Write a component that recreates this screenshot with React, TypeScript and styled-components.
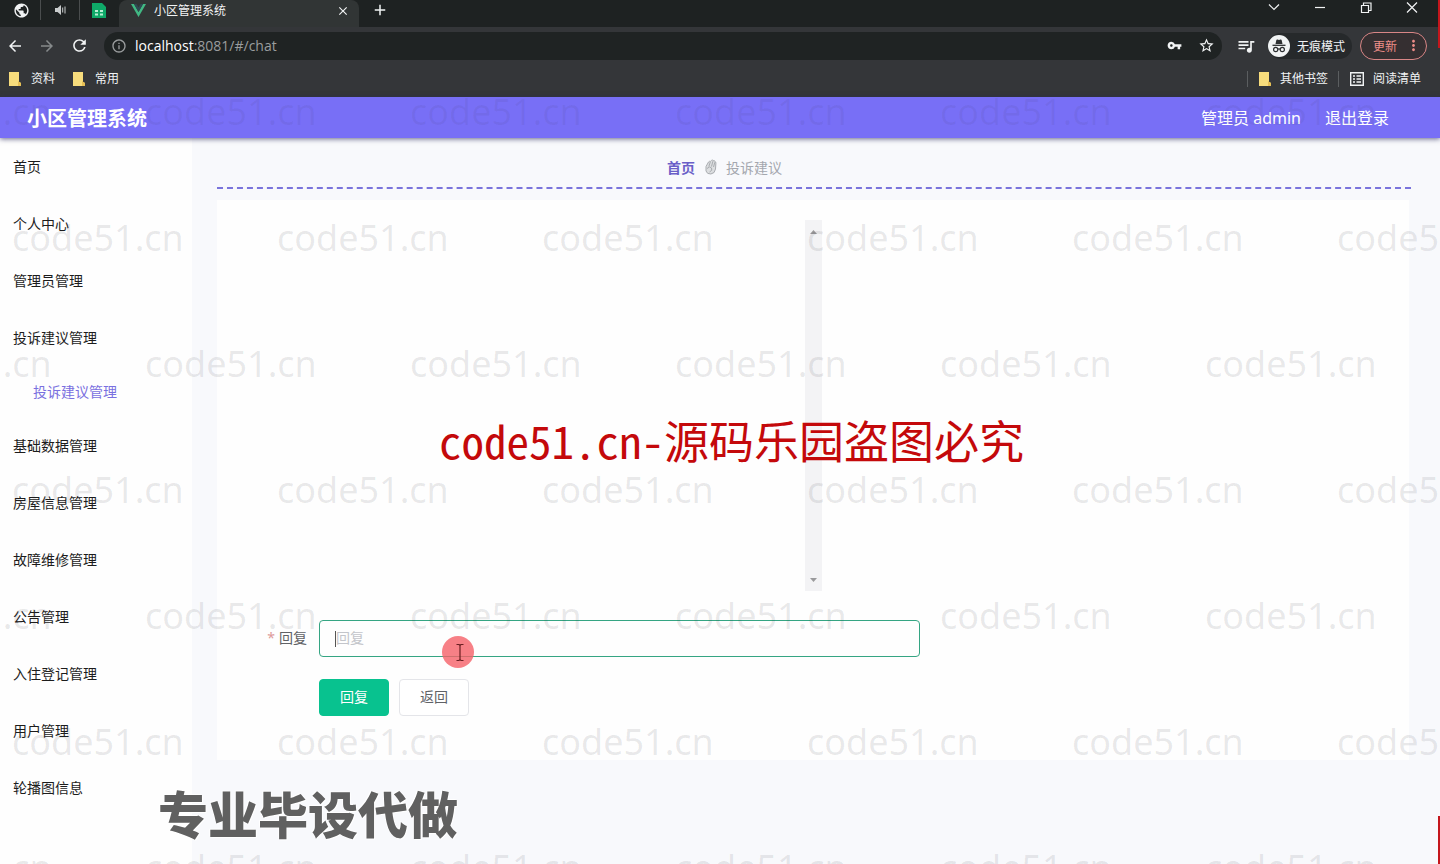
import React from "react";
import styled, { createGlobalStyle } from "styled-components";
import {
  MdArrowBack,
  MdArrowForward,
  MdRefresh,
  MdInfoOutline,
  MdVpnKey,
  MdStarBorder,
  MdQueueMusic,
  MdPublic,
  MdClose,
  MdAdd,
  MdMoreVert,
} from "react-icons/md";

const GlobalStyle = createGlobalStyle`
  * { box-sizing: border-box; }
  html, body { margin: 0; padding: 0; }
  body {
    font-family: "Noto Sans", "Noto Sans CJK SC", sans-serif;
    font-size: 14px;
    color: #222;
    background: #f8f9fc;
  }
  button, input { font: inherit; }
  a { color: inherit; text-decoration: none; }
  svg { display: block; flex: none; }
`;

const Page = styled.div`
  position: relative;
  display: flex;
  flex-direction: column;
  height: 100vh;
  overflow: hidden;
`;

/* ---------- browser window ---------- */

const Chrome = styled.div`
  flex: none;
  background: #343639;
  color: #f1f3f4;
  font-size: 12px;
`;

const TabStrip = styled.div`
  display: flex;
  height: 27px;
  padding-left: 2px;
  background: #1e2222;
`;

const PinnedTab = styled.div<{ $divider?: boolean }>`
  display: flex;
  align-items: center;
  justify-content: center;
  width: 39px;
  height: 20px;
  border-right: 1px solid ${(p) => (p.$divider ? "#4a4d4e" : "transparent")};
`;

const ActiveTab = styled.div`
  display: flex;
  align-items: center;
  width: 240px;
  height: 27px;
  padding: 0 9px 6px 12px;
  gap: 8px;
  background: #313535;
  border-radius: 8px 8px 0 0;
`;

const TabTitle = styled.span`
  flex: 1;
  line-height: 20px;
`;

const IconButton = styled.button<{ $dim?: boolean }>`
  display: flex;
  align-items: center;
  justify-content: center;
  padding: 0;
  border: 0;
  background: none;
  color: ${(p) => (p.$dim ? "#868a8b" : "#f1f3f4")};
`;

const NewTab = styled(IconButton)`
  width: 42px;
  height: 20px;
`;

const WindowControls = styled.div`
  display: flex;
  gap: 30px;
  height: 15px;
  margin-left: auto;
  padding-right: 20px;
`;

const Toolbar = styled.div`
  display: flex;
  align-items: center;
  height: 37px;
  padding: 0 13px 0 6px;
`;

const NavButtons = styled.div`
  display: flex;
  gap: 14px;
  margin-right: 15px;
`;

const AddressBar = styled.div`
  display: flex;
  flex: 1;
  align-items: center;
  height: 28px;
  padding: 0 7px;
  gap: 8px;
  border-radius: 14px;
  background: #1f2323;
  color: #9a9d9e;
`;

const Address = styled.span`
  flex: 1;
  font-family: "Open Sans", sans-serif;
  font-size: 14px;
  b { font-weight: 400; color: #fff; }
`;

const AddressActions = styled.div`
  display: flex;
  gap: 16px;
`;

const MediaButton = styled(IconButton)`
  margin: 0 12px 0 14px;
`;

const Incognito = styled.div`
  display: flex;
  align-items: center;
  gap: 7px;
  height: 26px;
  margin-right: 8px;
  padding-right: 7px;
  border-radius: 13px;
  background: #26292b;
  white-space: nowrap;
`;

const UpdateButton = styled.button`
  display: flex;
  align-items: center;
  gap: 8px;
  height: 28px;
  padding: 0 4px 0 12px;
  border: 1px solid #d98686;
  border-radius: 14px;
  background: #352f31;
  color: #ee8d88;
  white-space: nowrap;
`;

const Bookmarks = styled.nav`
  display: flex;
  align-items: center;
  height: 33px;
  padding: 0 19px 4px 8px;
`;

const Bookmark = styled.a<{ $end?: boolean }>`
  display: flex;
  align-items: center;
  gap: ${(p) => (p.$end ? "8px" : "9px")};
  margin-right: ${(p) => (p.$end ? "0" : "17px")};
  line-height: 20px;
`;

const BookmarkEnd = styled.div`
  display: flex;
  gap: 10px;
  margin-left: auto;
`;

const Divider = styled.span`
  width: 1px;
  height: 16px;
  margin-top: 2px;
  background: #5b5e60;
`;

/* ---------- application ---------- */

const Header = styled.header`
  position: relative;
  display: flex;
  flex: none;
  align-items: center;
  justify-content: space-between;
  height: 41px;
  padding: 2px 51px 0 27px;
  background: #786ff6;
  color: #fff;
  box-shadow: 0 1px 5px rgba(40, 40, 90, 0.7);
`;

const Brand = styled.h1`
  margin: 0;
  font-size: 20px;
  line-height: 28px;
`;

const Account = styled.div`
  display: flex;
  gap: 24px;
  padding-bottom: 1px;
  font-size: 16px;
  line-height: 24px;
`;

const Body = styled.div`
  display: flex;
  flex: 1;
  min-height: 0;
`;

const Sidebar = styled.nav`
  flex: none;
  width: 192px;
  background: #fefefe;
`;

const MenuItem = styled.a<{ $sub?: boolean }>`
  display: flex;
  align-items: center;
  height: ${(p) => (p.$sub ? "51px" : "57px")};
  padding-bottom: 2px;
  padding-left: ${(p) => (p.$sub ? "33px" : "13px")};
  color: ${(p) => (p.$sub ? "#7a70e0" : "#1c1c1c")};
`;

const Main = styled.main`
  flex: 1;
  min-width: 0;
  padding: 10px 29px 0 25px;
`;

const Breadcrumb = styled.nav`
  display: flex;
  align-items: center;
  justify-content: center;
  gap: 9px;
  height: 41px;
  padding: 0 15% 2px 0;
  border-bottom: 2px dashed #7a74dc;
  color: #a4a7ae;
`;

const Crumb = styled.a`
  font-weight: 700;
  color: #6a5fc8;
`;

const Card = styled.section`
  min-height: 560px;
  margin: 11px 2px 0 0;
  padding: 20px 0 0 5px;
  background: #fefefe;
`;

const ChatPanel = styled.div`
  display: flex;
  justify-content: flex-end;
  width: 600px;
  height: 371px;
`;

const Scrollbar = styled.div`
  display: flex;
  flex-direction: column;
  align-items: center;
  justify-content: space-between;
  width: 17px;
  padding: 9px 0 8px;
  background: #f3f3f5;
`;

const Field = styled.div`
  display: flex;
  align-items: center;
  width: 698px;
  margin-top: 29px;
`;

const Label = styled.label`
  width: 97px;
  padding: 0 12px 3px 0;
  text-align: right;
  color: #606266;
`;

const Required = styled.span`
  margin-right: 4px;
  color: #dd9a9a;
`;

const InputBox = styled.div`
  display: flex;
  flex: 1;
  align-items: center;
  height: 37px;
  padding: 0 15px;
  border: 1px solid #35a583;
  border-radius: 4px;
`;

const Caret = styled.span`
  width: 1px;
  height: 16px;
  background: #555;
`;

const TextInput = styled.input`
  flex: 1;
  min-width: 0;
  padding: 0 0 2px;
  border: 0;
  outline: 0;
  background: none;
  &::placeholder { color: #c3c5ca; opacity: 1; }
`;

const Actions = styled.div`
  display: flex;
  gap: 10px;
  margin: 22px 0 0 97px;
`;

const ActionButton = styled.button<{ $primary?: boolean }>`
  width: 70px;
  height: 37px;
  padding: 0 0 3px;
  border: 1px solid ${(p) => (p.$primary ? "#08c28f" : "#e4e5e9")};
  border-radius: 4px;
  background: ${(p) => (p.$primary ? "#08c28f" : "#fff")};
  color: ${(p) => (p.$primary ? "#fff" : "#606266")};
`;

/* ---------- layers over the page ---------- */

const Watermarks = styled.div`
  position: absolute;
  inset: 0;
  padding-top: 49px;
  overflow: hidden;
  pointer-events: none;
`;

const WatermarkRow = styled.div<{ $shift: boolean; $faint: boolean }>`
  display: flex;
  height: 126px;
  margin-left: ${(p) => (p.$shift ? "-120px" : "12px")};
  font-size: 36px;
  line-height: 126px;
  color: rgba(40, 40, 50, ${(p) => (p.$faint ? 0.06 : 0.1)});
  span { flex: none; width: 265px; }
`;

const Notice = styled.div`
  position: absolute;
  top: 410px;
  left: 0;
  right: 0;
  padding-left: 23px;
  text-align: center;
  font-family: "Noto Sans Mono CJK SC", "Noto Sans CJK SC", monospace;
  font-size: 45px;
  line-height: 60px;
  white-space: nowrap;
  color: #c4090b;
  pointer-events: none;
`;

const Promo = styled.div`
  position: absolute;
  left: 158px;
  bottom: 13px;
  font-size: 50px;
  line-height: 72px;
  font-weight: 900;
  color: #606060;
  text-shadow: 0 0 2px #fff, 1px 1px 1px #fff, -1px -1px 1px #fff;
  pointer-events: none;
`;

const Pointer = styled.svg`
  position: absolute;
  left: 441px;
  top: 635px;
  pointer-events: none;
`;

const EdgeMark = styled.div<{ $bottom?: boolean }>`
  position: absolute;
  right: 0;
  ${(p) => (p.$bottom ? "bottom: 0;" : "top: 0;")}
  width: 2px;
  height: 48px;
  background: #c4161c;
`;

const Folder = () => (
  <svg width="14" height="16" viewBox="0 0 14 16">
    <path d="M1 1h10v10l2 1v3H1z" fill="#f7dc7c" />
    <path d="M10 10l3 2v3h-3z" fill="#e6bf55" />
  </svg>
);

const VueLogo = () => (
  <svg width="15" height="13" viewBox="0 0 15 13">
    <path d="M0 0h3l4.500 8L12 0h3L7.500 13z" fill="#41b883" />
    <path d="M3 0h2.500l2 3.500L9.500 0H12L7.500 8z" fill="#2f4a52" />
  </svg>
);

const SheetIcon = () => (
  <svg width="14" height="15" viewBox="0 0 14 15">
    <path d="M0 0h10l4 4v11H0z" fill="#0fa968" />
    <path d="M3 7h3v2H3zM8 7h3v2H8zM3 10.500h3v2H3zM8 10.500h3v2H8z" fill="#b8f0d4" />
  </svg>
);

const Speaker = () => (
  <svg width="11" height="10" viewBox="0 0 11 10">
    <path d="M0 3h2.500L6 0v10L2.500 7H0z" fill="#c9cccd" />
    <path d="M7.700 2.500v5M10 1.500v7" stroke="#c9cccd" strokeWidth="1" />
  </svg>
);

const ReadingListIcon = () => (
  <svg width="16" height="20" viewBox="0 0 16 20" fill="none" stroke="#f1f3f4">
    <path d="M1.700 3.700h12.600v12.600H1.700z" strokeWidth="1.400" />
    <path d="M4 7h2M4 10h2M4 13h2M7.500 7H12M7.500 10H12M7.500 13H12" strokeWidth="1.500" />
  </svg>
);

const IncognitoIcon = () => (
  <svg width="22" height="22" viewBox="0 0 22 22">
    <circle cx="11" cy="11" r="11" fill="#f1f3f4" />
    <path d="M7.500 9L8.300 5.200q.3-.9 1.200-.6l1.500.4 1.500-.4q.9-.3 1.200.6L14.500 9z" fill="#2c2f31" />
    <path d="M4.500 10.300h13" stroke="#2c2f31" strokeWidth="1.300" />
    <g fill="none" stroke="#2c2f31" strokeWidth="1.200">
      <circle cx="7.700" cy="14.500" r="2.100" />
      <circle cx="14.300" cy="14.500" r="2.100" />
      <path d="M9.800 14.200q1.200-.7 2.400 0" />
    </g>
  </svg>
);

const HandIcon = () => (
  <svg width="13" height="16" viewBox="0 0 13 16" fill="#dcdee0" stroke="#a9acb0" strokeWidth="1">
    <path d="M2 7.500L4.500 3q.8-1.200 1.700-.4L7.500 1.400q1-.8 1.700.2 1.500-.5 1.700 1 1.200.2 1 1.600L11.500 10q-.6 4.500-4.600 5Q3 15.300 2 12z" />
    <path d="M6.300 3L4.800 7.500M8.900 2.200L7.500 7.500M10.900 3.200L9.500 8M3 9.500q3-3 4.500-.5T5.500 13" fill="none" />
  </svg>
);

const WindowGlyph = ({ d }: { d: string }) => (
  <svg width="16" height="15" viewBox="0 0 16 15" fill="none" stroke="#f1f3f4" strokeWidth="1.200">
    <path d={d} />
  </svg>
);

const menuTop = ["首页", "个人中心", "管理员管理", "投诉建议管理"];
const menuRest = [
  "基础数据管理",
  "房屋信息管理",
  "故障维修管理",
  "公告管理",
  "入住登记管理",
  "用户管理",
  "轮播图信息",
];

const windowGlyphs = [
  { label: "搜索标签页", d: "M3 4.500l5 5 5-5" },
  { label: "最小化", d: "M3 7.500h10" },
  { label: "还原", d: "M3.500 5.500h7v7h-7zM5.500 5.500v-2.500h7.500v7.500h-2.500" },
  { label: "关闭窗口", d: "M3 2.500l10 10M13 2.500l-10 10" },
];

export default function App() {
  return (
    <Page>
      <GlobalStyle />
      <Chrome>
        <TabStrip>
          <PinnedTab $divider><MdPublic size={17} /></PinnedTab>
          <PinnedTab $divider><Speaker /></PinnedTab>
          <PinnedTab><SheetIcon /></PinnedTab>
          <ActiveTab>
            <VueLogo />
            <TabTitle>小区管理系统</TabTitle>
            <IconButton aria-label="关闭标签页"><MdClose size={14} /></IconButton>
          </ActiveTab>
          <NewTab aria-label="新标签页"><MdAdd size={18} /></NewTab>
          <WindowControls>
            {windowGlyphs.map((g) => (
              <IconButton key={g.label} aria-label={g.label}><WindowGlyph d={g.d} /></IconButton>
            ))}
          </WindowControls>
        </TabStrip>
        <Toolbar>
          <NavButtons>
            <IconButton aria-label="后退"><MdArrowBack size={18} /></IconButton>
            <IconButton aria-label="前进" $dim><MdArrowForward size={18} /></IconButton>
            <IconButton aria-label="刷新"><MdRefresh size={19} /></IconButton>
          </NavButtons>
          <AddressBar>
            <MdInfoOutline size={16} />
            <Address><b>localhost</b>:8081/#/chat</Address>
            <AddressActions>
              <IconButton aria-label="密码"><MdVpnKey size={15} /></IconButton>
              <IconButton aria-label="收藏"><MdStarBorder size={17} /></IconButton>
            </AddressActions>
          </AddressBar>
          <MediaButton aria-label="媒体控制"><MdQueueMusic size={20} /></MediaButton>
          <Incognito>
            <IncognitoIcon />
            无痕模式
          </Incognito>
          <UpdateButton>更新<MdMoreVert size={17} /></UpdateButton>
        </Toolbar>
        <Bookmarks>
          <Bookmark href="#"><Folder />资料</Bookmark>
          <Bookmark href="#"><Folder />常用</Bookmark>
          <BookmarkEnd>
            <Divider />
            <Bookmark href="#" $end><Folder />其他书签</Bookmark>
            <Divider />
            <Bookmark href="#" $end><ReadingListIcon />阅读清单</Bookmark>
          </BookmarkEnd>
        </Bookmarks>
      </Chrome>

      <Header>
        <Brand>小区管理系统</Brand>
        <Account>
          <span>管理员 admin</span>
          <a href="#">退出登录</a>
        </Account>
      </Header>

      <Body>
        <Sidebar>
          {menuTop.map((t) => <MenuItem href="#" key={t}>{t}</MenuItem>)}
          <MenuItem href="#" $sub>投诉建议管理</MenuItem>
          {menuRest.map((t) => <MenuItem href="#" key={t}>{t}</MenuItem>)}
        </Sidebar>
        <Main>
          <Breadcrumb>
            <Crumb href="#">首页</Crumb>
            <HandIcon />
            <span>投诉建议</span>
          </Breadcrumb>
          <Card>
            <ChatPanel>
              <Scrollbar>
                <svg width="7" height="5" viewBox="0 0 7 5"><path d="M0 5l3.500-4L7 5z" fill="#9a9a9c" /></svg>
                <svg width="7" height="5" viewBox="0 0 7 5"><path d="M0 0l3.500 4L7 0z" fill="#9a9a9c" /></svg>
              </Scrollbar>
            </ChatPanel>
            <Field>
              <Label htmlFor="reply"><Required>*</Required>回复</Label>
              <InputBox>
                <Caret />
                <TextInput id="reply" placeholder="回复" />
              </InputBox>
            </Field>
            <Actions>
              <ActionButton $primary>回复</ActionButton>
              <ActionButton>返回</ActionButton>
            </Actions>
          </Card>
        </Main>
      </Body>

      <Watermarks>
        {[0, 1, 2, 3, 4, 5, 6].map((row) => (
          <WatermarkRow key={row} $shift={row % 2 === 0} $faint={row === 0}>
            {[0, 1, 2, 3, 4, 5].map((col) => <span key={col}>code51.cn</span>)}
          </WatermarkRow>
        ))}
      </Watermarks>
      <Pointer width="34" height="34" viewBox="0 0 34 34">
        <circle cx="17" cy="17" r="16" fill="#f56068" fillOpacity="0.8" />
        <path d="M15.500 9.500h2.500l1 1 1-1h2.500M19 10.500v14M15.500 25.500h2.500l1-1 1 1h2.500" fill="none" stroke="#6b1f22" strokeWidth="1.200" />
      </Pointer>
      <Notice>code51.cn-源码乐园盗图必究</Notice>
      <Promo>专业毕设代做</Promo>
      <EdgeMark />
      <EdgeMark $bottom />
    </Page>
  );
}
